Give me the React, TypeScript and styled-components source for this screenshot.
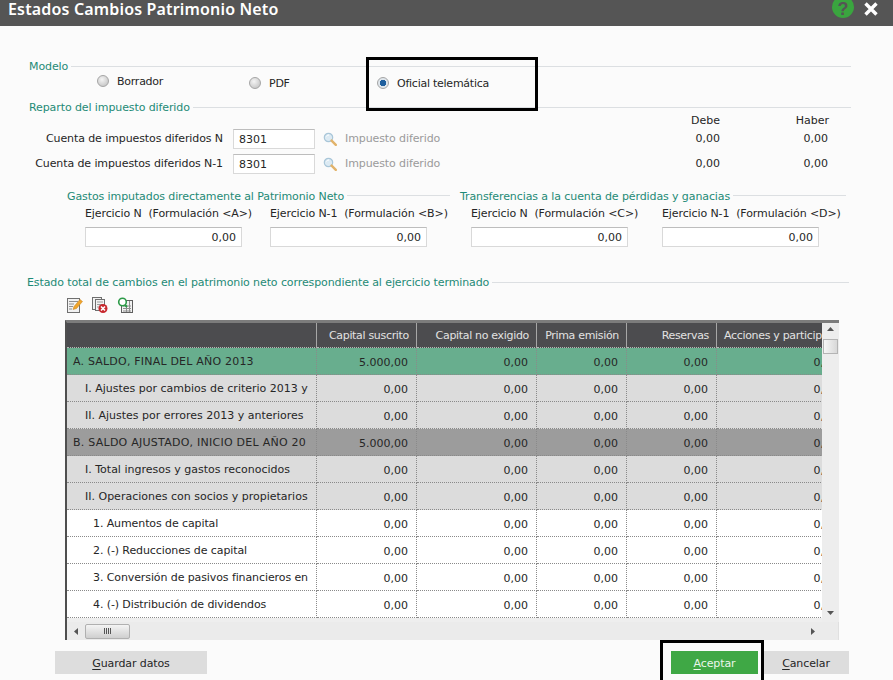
import React from "react";
import styled, { createGlobalStyle } from "styled-components";

const Global = createGlobalStyle`
  html, body { margin: 0; padding: 0; background: #fbfbfb; }
  * { box-sizing: border-box; }
`;

const Page = styled.div`
  position: relative;
  width: 893px;
  height: 680px;
  overflow: hidden;
  background: #fbfbfb;
  color: #262626;
  font-family: "DejaVu Sans", "Liberation Sans", sans-serif;
  font-size: 11px;
  line-height: 14px;
  letter-spacing: -0.1px;
`;

const TitleBar = styled.header`
  display: flex;
  align-items: center;
  height: 26px;
  padding: 0 15px 0 8px;
  overflow: hidden;
  background: #555555;
  color: #ffffff;
`;

const Title = styled.h1`
  flex: 1;
  margin: 0 0 8px;
  font-family: "Noto Sans", sans-serif;
  font-size: 16px;
  font-weight: 600;
  line-height: 18px;
  letter-spacing: 0.16px;
`;

const HelpBadge = styled.span`
  display: flex;
  align-items: center;
  justify-content: center;
  flex: none;
  width: 22px;
  height: 22px;
  margin: 0 10px 12px 0;
  padding-top: 3px;
  border-radius: 50%;
  background: #3aa53f;
  color: #555555;
  font-family: "Liberation Sans", sans-serif;
  font-size: 18px;
  font-weight: 700;
`;

const CloseIcon = styled.svg`
  flex: none;
  margin-bottom: 8px;
`;

const Legend = styled.div<{ $left: number; $width: number; $top: number }>`
  display: flex;
  align-items: center;
  gap: 3px;
  height: 14px;
  width: ${(p) => p.$width}px;
  margin: ${(p) => p.$top}px 0 0 ${(p) => p.$left}px;
  color: #1e8a76;
  white-space: nowrap;
  &::after {
    content: "";
    flex: 1;
    height: 1px;
    background: #dcdfe2;
    transform: translateY(-1px);
  }
`;

const GroupLegend = styled(Legend)`
  &::after {
    transform: translateY(-2px);
  }
`;

const RadioRow = styled.div`
  display: flex;
  height: 27px;
  padding-left: 97px;
`;

const RadioOption = styled.label<{ $width: number; $drop: number }>`
  display: flex;
  align-items: center;
  gap: 8px;
  width: ${(p) => p.$width}px;
  height: 14px;
  margin-top: ${(p) => p.$drop}px;
  letter-spacing: -0.25px;
`;

const RadioDot = styled.span<{ $on?: boolean }>`
  width: 12px;
  height: 12px;
  flex: none;
  border-radius: 50%;
  border: 1px solid #a5a5a5;
  transform: translateY(-1px);
  background: ${(p) =>
    p.$on
      ? "radial-gradient(circle, #1f5f9e 0 3px, #dfe6ec 3.5px)"
      : "radial-gradient(circle at 40% 35%, #f4f4f4, #bcbcbc)"};
`;

const AmountHeader = styled.div`
  display: flex;
  height: 15px;
  margin-top: -1px;
  padding-left: 441px;
`;

const AccountRow = styled.div<{ $top: number }>`
  display: flex;
  align-items: center;
  height: 20px;
  margin-top: ${(p) => p.$top}px;
  padding-left: 29px;
`;

const AccountLabel = styled.span`
  width: 194px;
  margin-right: 10px;
  text-align: right;
  white-space: nowrap;
`;

const CodeInput = styled.div`
  width: 82px;
  height: 20px;
  margin-right: 8px;
  padding: 3px 0 0 5px;
  border: 1px solid #d9d9d9;
  border-top-color: #bdbdbd;
  background: #ffffff;
  letter-spacing: 0;
`;

const Hint = styled.span`
  width: 96px;
  margin-left: 8px;
  color: #9a9a9a;
  white-space: nowrap;
`;

const Amount = styled.span<{ $width: number }>`
  width: ${(p) => p.$width}px;
  text-align: right;
  letter-spacing: 0;
`;

const Groups = styled.div`
  display: flex;
  gap: 10px;
  margin: 16px 0 0 67px;
`;

const Group = styled.section<{ $width: number }>`
  width: ${(p) => p.$width}px;
`;

const GroupFields = styled.div<{ $indent: number; $step: number }>`
  display: grid;
  grid-template-columns: repeat(2, ${(p) => p.$step}px);
  padding: 3px 0 0 ${(p) => p.$indent}px;
`;

const Field = styled.div`
  display: flex;
  flex-direction: column;
  gap: 6px;
`;

const FieldLabel = styled.span`
  white-space: pre;
`;

const ValueInput = styled.div`
  width: 157px;
  height: 20px;
  padding: 3px 5px 0 0;
  border: 1px solid #d9d9d9;
  border-top-color: #bdbdbd;
  background: #ffffff;
  text-align: right;
  letter-spacing: 0;
`;

const Toolbar = styled.div`
  display: flex;
  gap: 9px;
  height: 16px;
  margin: 7px 0 0 67px;
`;

const Frame = styled.div`
  display: grid;
  grid-template-columns: 755px 17px;
  grid-template-rows: 299px 18px;
  width: 774px;
  height: 320px;
  margin: 7px 0 0 65px;
  border-top: 3px solid #7c7c7c;
  border-left: 2px solid #4f4f4f;
  background: #ececec;
`;

const Viewport = styled.div`
  overflow: hidden;
  background: #eeeeee;
`;

const Table = styled.table`
  width: 780px;
  table-layout: fixed;
  border-collapse: separate;
  border-spacing: 0;
`;

const HeadCell = styled.th<{ $start?: boolean }>`
  height: 25px;
  padding: 2px ${(p) => (p.$start ? 0 : 7)}px 0 ${(p) => (p.$start ? 7 : 0)}px;
  overflow: hidden;
  background: #4c4c4f;
  color: #e2e2e2;
  font-weight: 400;
  letter-spacing: -0.32px;
  text-align: ${(p) => (p.$start ? "left" : "right")};
  white-space: nowrap;
  border-right: 1px solid #a6a6a6;
  border-bottom: 1px dotted #b5b5b5;
`;

const rowColors = { total: "#68ae8e", section: "#9c9c9c", sub: "#dcdcdc", plain: "#ffffff" };
const rowSpacing = { total: 0.2, section: 0.25, sub: 0, plain: -0.1 };
type RowKind = keyof typeof rowColors;

const BodyRow = styled.tr<{ $kind: RowKind }>`
  background: ${(p) => rowColors[p.$kind]};
`;

const NameCell = styled.td<{ $indent: number; $kind: RowKind }>`
  height: 27px;
  padding: 2px 8px 0 ${(p) => p.$indent}px;
  overflow: hidden;
  white-space: nowrap;
  letter-spacing: ${(p) => rowSpacing[p.$kind]}px;
  border-right: 1px dotted #8a8a8a;
  border-bottom: 1px dotted #8a8a8a;
`;

const NumCell = styled.td`
  height: 27px;
  padding: 4px 8px 0 0;
  overflow: hidden;
  text-align: right;
  white-space: nowrap;
  letter-spacing: 0;
  border-right: 1px dotted #8a8a8a;
  border-bottom: 1px dotted #8a8a8a;
`;

const VScroll = styled.div`
  display: flex;
  flex-direction: column;
  align-items: center;
  padding: 3px 0 6px;
  background: #ededed;
`;

const ScrollSpacer = styled.div`
  flex: 1;
`;

const VThumb = styled.div`
  width: 15px;
  height: 15px;
  margin-top: 6px;
  border: 1px solid #b4b4b4;
  background: linear-gradient(90deg, #f6f6f6, #d8d8d8);
`;

const HScroll = styled.div`
  grid-column: 1 / 3;
  display: flex;
  align-items: center;
  padding: 0 22px 0 6px;
  background: #ebebeb;
  border-right: 1px solid #e0e0e0;
`;

const HThumb = styled.div`
  display: flex;
  align-items: center;
  justify-content: center;
  gap: 1px;
  width: 45px;
  height: 15px;
  margin-left: 5px;
  border: 1px solid #b0b0b0;
  border-radius: 2px;
  background: linear-gradient(#f4f4f4, #cfcfcf);
`;

const Grip = styled.span`
  width: 1px;
  height: 6px;
  background: #555555;
`;

const ButtonRow = styled.div`
  display: flex;
  height: 23px;
  margin-top: 11px;
  padding: 0 44px 0 55px;
`;

const Button = styled.div<{ $width: number; $primary?: boolean }>`
  display: flex;
  align-items: center;
  justify-content: center;
  width: ${(p) => p.$width}px;
  padding-top: 2px;
  background: ${(p) => (p.$primary ? "#3fa845" : "#dddddd")};
  color: ${(p) => (p.$primary ? "#eaf6ea" : "#262626")};
  u { text-underline-offset: 2px; }
`;

const ButtonGap = styled.div`
  flex: 1;
`;

const CancelGap = styled.div`
  width: 5px;
`;

const Highlight = styled.div<{ $x: number; $y: number; $w: number; $h: number }>`
  position: absolute;
  left: ${(p) => p.$x}px;
  top: ${(p) => p.$y}px;
  width: ${(p) => p.$w}px;
  height: ${(p) => p.$h}px;
  border: 3px solid #000000;
  pointer-events: none;
`;

const Magnifier = () => (
  <svg width="14" height="14" viewBox="0 0 14 14">
    <circle cx="5.5" cy="5.5" r="4.2" fill="#dceaf3" stroke="#a9c6d8" strokeWidth="1.2" />
    <path d="M3.5 4.5a2.5 2.5 0 0 1 2.5-1.5" stroke="#ffffff" fill="none" />
    <path d="M8.6 8.6 12.8 12.8" stroke="#e2b36a" strokeWidth="2.4" strokeLinecap="round" />
  </svg>
);

const EditIcon = () => (
  <svg width="16" height="16" viewBox="0 0 16 16">
    <rect x="0.5" y="1.5" width="12" height="14" fill="#f2f2f2" stroke="#6f6f6f" />
    <path d="M2 4.5h9M2 7h5M2 9.5h4M2 12h3" stroke="#8f8f8f" />
    <path d="M6 12.5 7 9.5 13 2.5 15.5 4.5 9.5 11.5Z" fill="#f0a52c" stroke="#c77f14" strokeWidth="0.5" />
  </svg>
);

const DeleteIcon = () => (
  <svg width="16" height="16" viewBox="0 0 16 16">
    <rect x="0.5" y="0.5" width="9" height="12" fill="#f2f2f2" stroke="#6f6f6f" />
    <rect x="3.5" y="2.5" width="9" height="11" fill="#f2f2f2" stroke="#6f6f6f" />
    <path d="M5 5h6M5 7.5h6M5 10h3" stroke="#9a9a9a" />
    <circle cx="11" cy="11.5" r="4.5" fill="#c8282e" />
    <path d="M9 9.5 13 13.5M13 9.5 9 13.5" stroke="#ffffff" strokeWidth="1.6" />
  </svg>
);

const FindIcon = () => (
  <svg width="16" height="16" viewBox="0 0 16 16">
    <rect x="4.5" y="3.5" width="11" height="12" fill="#f2f2f2" stroke="#5f5f5f" />
    <path d="M6 9h8M6 11.5h8M6 14h8M9.5 8v7M12.5 4v11" stroke="#8f8f8f" />
    <circle cx="5.5" cy="5" r="3.8" fill="#ffffff" stroke="#2c9a48" strokeWidth="1.6" />
    <path d="M8 8 10 10" stroke="#2c9a48" strokeWidth="2" />
  </svg>
);

const Arrow = ({ dir }: { dir: "up" | "down" | "left" | "right" }) => {
  const points = {
    up: "0,5 7,5 3.5,1",
    down: "0,2 7,2 3.5,6",
    left: "5,0 5,7 1,3.5",
    right: "2,0 2,7 6,3.5",
  }[dir];
  return (
    <svg width="7" height="7" viewBox="0 0 7 7">
      <polygon points={points} fill="#555555" />
    </svg>
  );
};

const columns = [250, 100, 120, 90, 90, 130];
const headers = ["", "Capital suscrito", "Capital no exigido", "Prima emisión", "Reservas", "Acciones y participaciones"];

const rows: { name: string; kind: RowKind; indent: number; capital?: string }[] = [
  { name: "A. SALDO, FINAL DEL AÑO 2013", kind: "total", indent: 6, capital: "5.000,00" },
  { name: "I. Ajustes por cambios de criterio 2013 y", kind: "sub", indent: 18 },
  { name: "II. Ajustes por errores 2013 y anteriores", kind: "sub", indent: 18 },
  { name: "B. SALDO AJUSTADO, INICIO DEL AÑO 20", kind: "section", indent: 6, capital: "5.000,00" },
  { name: "I. Total ingresos y gastos reconocidos", kind: "sub", indent: 18 },
  { name: "II. Operaciones con socios y propietarios", kind: "sub", indent: 18 },
  { name: "1. Aumentos de capital", kind: "plain", indent: 26 },
  { name: "2. (-) Reducciones de capital", kind: "plain", indent: 26 },
  { name: "3. Conversión de pasivos financieros en", kind: "plain", indent: 26 },
  { name: "4. (-) Distribución de dividendos", kind: "plain", indent: 26 },
];

const accounts = [
  { label: "Cuenta de impuestos diferidos N", top: 0 },
  { label: "Cuenta de impuestos diferidos N-1", top: 5 },
];

export default function App() {
  return (
    <Page>
      <Global />
      <TitleBar>
        <Title>Estados Cambios Patrimonio Neto</Title>
        <HelpBadge>?</HelpBadge>
        <CloseIcon width="14" height="14" viewBox="0 0 14 14">
          <path d="M1.5 1.5 12.5 12.5M12.5 1.5 1.5 12.5" stroke="#ffffff" strokeWidth="3.4" />
        </CloseIcon>
      </TitleBar>

      <Legend $left={29} $width={822} $top={34}>Modelo</Legend>
      <RadioRow>
        <RadioOption $width={152} $drop={1}><RadioDot />Borrador</RadioOption>
        <RadioOption $width={128} $drop={3}><RadioDot />PDF</RadioOption>
        <RadioOption $width={160} $drop={3}><RadioDot $on />Oficial telemática</RadioOption>
      </RadioRow>
      <Legend $left={29} $width={822} $top={0}>Reparto del impuesto diferido</Legend>

      <AmountHeader>
        <Amount $width={279}>Debe</Amount>
        <Amount $width={109}>Haber</Amount>
      </AmountHeader>
      {accounts.map((a) => (
        <AccountRow key={a.label} $top={a.top}>
          <AccountLabel>{a.label}</AccountLabel>
          <CodeInput>8301</CodeInput>
          <Magnifier />
          <Hint>Impuesto diferido</Hint>
          <Amount $width={279}>0,00</Amount>
          <Amount $width={108}>0,00</Amount>
        </AccountRow>
      ))}

      <Groups>
        <Group $width={383}>
          <GroupLegend $left={0} $width={383} $top={0}>Gastos imputados directamente al Patrimonio Neto</GroupLegend>
          <GroupFields $indent={18} $step={185}>
            <Field>
              <FieldLabel>{"Ejercicio N  (Formulación <A>)"}</FieldLabel>
              <ValueInput>0,00</ValueInput>
            </Field>
            <Field>
              <FieldLabel>{"Ejercicio N-1  (Formulación <B>)"}</FieldLabel>
              <ValueInput>0,00</ValueInput>
            </Field>
          </GroupFields>
        </Group>
        <Group $width={386}>
          <GroupLegend $left={0} $width={386} $top={0}>Transferencias a la cuenta de pérdidas y ganacias</GroupLegend>
          <GroupFields $indent={11} $step={191}>
            <Field>
              <FieldLabel>{"Ejercicio N  (Formulación <C>)"}</FieldLabel>
              <ValueInput>0,00</ValueInput>
            </Field>
            <Field>
              <FieldLabel>{"Ejercicio N-1  (Formulación <D>)"}</FieldLabel>
              <ValueInput>0,00</ValueInput>
            </Field>
          </GroupFields>
        </Group>
      </Groups>

      <Legend $left={27} $width={822} $top={29}>Estado total de cambios en el patrimonio neto correspondiente al ejercicio terminado</Legend>
      <Toolbar>
        <EditIcon />
        <DeleteIcon />
        <FindIcon />
      </Toolbar>

      <Frame>
        <Viewport>
          <Table>
            <colgroup>
              {columns.map((w, i) => (
                <col key={i} width={w} />
              ))}
            </colgroup>
            <thead>
              <tr>
                {headers.map((h, i) => (
                  <HeadCell key={i} $start={i === headers.length - 1}>{h}</HeadCell>
                ))}
              </tr>
            </thead>
            <tbody>
              {rows.map((r, i) => (
                <BodyRow key={i} $kind={r.kind}>
                  <NameCell $indent={r.indent} $kind={r.kind}>{r.name}</NameCell>
                  <NumCell>{r.capital ?? "0,00"}</NumCell>
                  <NumCell>0,00</NumCell>
                  <NumCell>0,00</NumCell>
                  <NumCell>0,00</NumCell>
                  <NumCell>0,00</NumCell>
                </BodyRow>
              ))}
            </tbody>
          </Table>
        </Viewport>
        <VScroll>
          <Arrow dir="up" />
          <VThumb />
          <ScrollSpacer />
          <Arrow dir="down" />
        </VScroll>
        <HScroll>
          <Arrow dir="left" />
          <HThumb>
            <Grip />
            <Grip />
            <Grip />
            <Grip />
          </HThumb>
          <ScrollSpacer />
          <Arrow dir="right" />
        </HScroll>
      </Frame>

      <ButtonRow>
        <Button $width={152}>
          <span><u>G</u>uardar datos</span>
        </Button>
        <ButtonGap />
        <Button $width={87} $primary>
          <span><u>A</u>ceptar</span>
        </Button>
        <CancelGap />
        <Button $width={86}>
          <span><u>C</u>ancelar</span>
        </Button>
      </ButtonRow>

      <Highlight $x={366} $y={57} $w={172} $h={54} />
      <Highlight $x={660} $y={640} $w={104} $h={43} />
    </Page>
  );
}
